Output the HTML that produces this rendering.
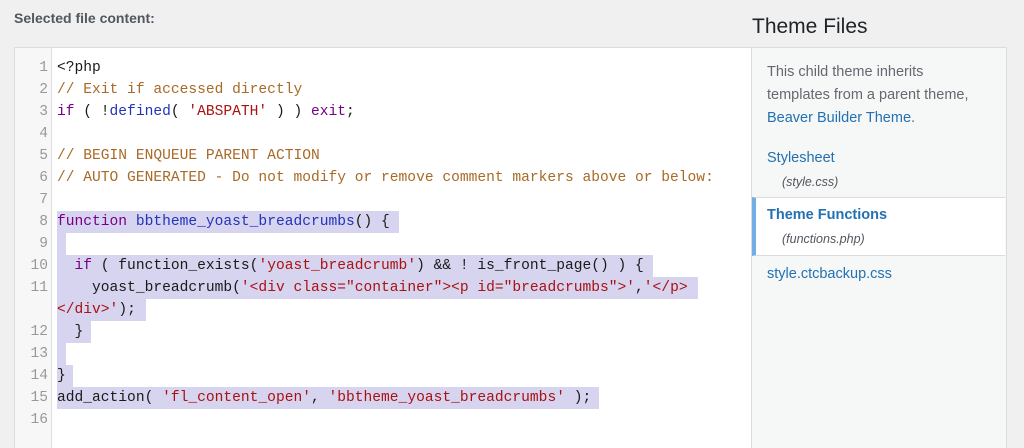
<!DOCTYPE html>
<html><head><style>
body{margin:0;width:1024px;height:433px;background:#f0f0f1;font-family:"Liberation Sans",sans-serif;position:relative;overflow:hidden}
.lbl{position:absolute;left:14px;top:10px;font-size:14px;font-weight:bold;color:#50575e}
.ed{position:absolute;left:14px;top:47px;width:736px;height:400px;background:#fff;border:1px solid #dcdcde;border-bottom:none}
.gut{position:absolute;left:0;top:0;width:36px;height:100%;background:#f7f7f7;border-right:1px solid #ddd}
.hl{position:absolute;background:#d7d4f0;height:22px}
.code{position:absolute;left:42px;top:9px;font-family:"Liberation Mono",monospace;font-size:14.6px;line-height:22px;color:#1a1a1a;white-space:pre}
.nums{position:absolute;left:0;top:9px;width:33px;text-align:right;font-family:"Liberation Mono",monospace;font-size:14.6px;line-height:22px;color:#999;white-space:pre}
.c{color:#a86a26}.k{color:#770088}.s{color:#aa1111}.f{color:#2233bb}
.h{position:absolute;left:752px;top:15px;font-size:21px;color:#1d2327}
.side{position:absolute;left:751px;top:47px;width:254px;height:400px;background:#f6f7f7;border:1px solid #dcdcde;border-bottom:none;font-size:14.5px;color:#646970}
.side p{margin:0;position:absolute;left:15px;line-height:23px}
a{color:#2271b1;text-decoration:none}
.sub{font-style:italic;font-size:12.5px;color:#50575e}
.sel{position:absolute;left:0;top:149px;width:253px;height:59px;background:#fff;border-top:1px solid #dcdcde;border-bottom:1px solid #dcdcde;border-left:4px solid #72aee6;box-sizing:border-box}
</style></head><body>
<div class="lbl">Selected file content:</div>
<div class="ed">
<div class="gut"></div>
<div class="hl" style="left:42px;top:163px;width:342px"></div>
<div class="hl" style="left:42px;top:185px;width:9px"></div>
<div class="hl" style="left:42px;top:207px;width:596px"></div>
<div class="hl" style="left:42px;top:229px;width:641px"></div>
<div class="hl" style="left:42px;top:251px;width:89px"></div>
<div class="hl" style="left:42px;top:273px;width:34px"></div>
<div class="hl" style="left:42px;top:295px;width:9px"></div>
<div class="hl" style="left:42px;top:317px;width:16px"></div>
<div class="hl" style="left:42px;top:339px;width:542px"></div>
<div class="nums">1
2
3
4
5
6
7
8
9
10
11

12
13
14
15
16</div>
<div class="code">&lt;?php
<span class="c">// Exit if accessed directly</span>
<span class="k">if</span> ( !<span class="f">defined</span>( <span class="s">'ABSPATH'</span> ) ) <span class="k">exit</span>;

<span class="c">// BEGIN ENQUEUE PARENT ACTION</span>
<span class="c">// AUTO GENERATED - Do not modify or remove comment markers above or below:</span>

<span class="k">function</span> <span class="f">bbtheme_yoast_breadcrumbs</span>() {

  <span class="k">if</span> ( function_exists(<span class="s">'yoast_breadcrumb'</span>) &amp;&amp; ! is_front_page() ) {
    yoast_breadcrumb(<span class="s">'&lt;div class="container"&gt;&lt;p id="breadcrumbs"&gt;'</span>,<span class="s">'&lt;/p&gt;</span>
<span class="s">&lt;/div&gt;'</span>);
  }

}
add_action( <span class="s">'fl_content_open'</span>, <span class="s">'bbtheme_yoast_breadcrumbs'</span> );
</div>
</div>
<div class="h">Theme Files</div>
<div class="side">
<p style="top:13px">This child theme inherits<br>templates from a parent theme,<br><a>Beaver Builder Theme</a>.</p>
<p style="top:99px"><a>Stylesheet</a></p>
<p style="top:123px;left:30px" class="sub">(style.css)</p>
<div class="sel"></div>
<p style="top:156px"><a style="font-weight:bold">Theme Functions</a></p>
<p style="top:180px;left:30px" class="sub">(functions.php)</p>
<p style="top:215px"><a>style.ctcbackup.css</a></p>
</div>
</body></html>
